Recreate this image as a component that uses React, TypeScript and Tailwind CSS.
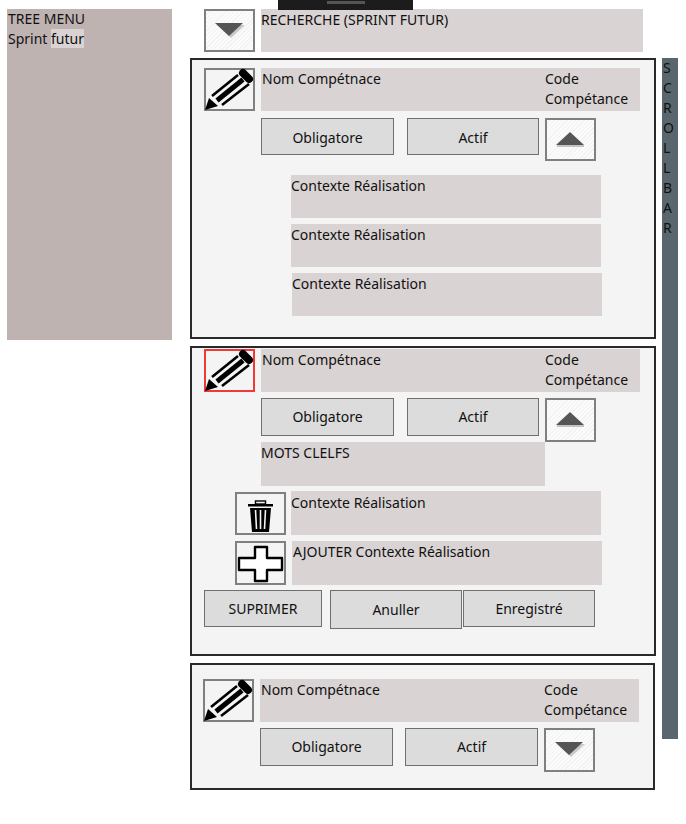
import React from "react";

const font = "font-['Noto_Sans','Open_Sans',sans-serif]";

function Pencil() {
  return (
    <svg width="51" height="43" viewBox="0 0 51 43" className="absolute left-[-2px] top-[-2px]">
      <polygon points="1,42 5,30 14,38" fill="#000" />
      <path d="M8 28 L34 7" stroke="#000" strokeWidth="2.6" fill="none" />
      <path d="M18 37 L45 16" stroke="#000" strokeWidth="2.6" fill="none" />
      <path d="M13 32.5 L39 11.5" stroke="#000" strokeWidth="5" fill="none" />
      <path d="M39 5 L45 11" stroke="#000" strokeWidth="8" strokeLinecap="round" fill="none" />
    </svg>
  );
}

function IconBox({ children, red, hatch, h = "h-[43px]", className = "" }: { children: React.ReactNode; red?: boolean; hatch?: boolean; h?: string; className?: string }) {
  return (
    <div
      className={`relative w-[51px] ${h} shrink-0 border-2 ${red ? "border-[#f03a3a]" : "border-[#808080]"} ${
        hatch ? "bg-[repeating-linear-gradient(135deg,#fbfbfb_0px,#fbfbfb_2px,#f2f2f2_2px,#f2f2f2_3px)]" : "bg-[#f4f4f4]"
      } ${className}`}
    >
      {children}
    </div>
  );
}

function Arrow({ up }: { up?: boolean }) {
  return (
    <svg width="51" height="43" viewBox="0 0 51 43" className="absolute left-[-2px] top-[-2px]">
      {up ? (
        <>
          <polygon points="11,27 39,27 25,14" fill="#555" />
          <rect x="12" y="27" width="27" height="2" fill="#c4c4c4" />
        </>
      ) : (
        <>
          <polygon points="13,16 41,16 27,29" fill="#c8c8c8" />
          <polygon points="11,14 39,14 25,27" fill="#555" />
        </>
      )}
    </svg>
  );
}

function Field({ children, h = "h-[43px]", className = "" }: { children: React.ReactNode; h?: string; className?: string }) {
  return <div className={`bg-[#d9d3d3] ${h} shrink-0 ${className}`}>{children}</div>;
}

function Btn({ children, h = "h-[38px]", className = "" }: { children: React.ReactNode; h?: string; className?: string }) {
  return (
    <div className={`flex items-center justify-center ${h} shrink-0 bg-[#dcdcdc] border border-[#707070] ${className}`}>
      {children}
    </div>
  );
}

function Head({ red }: { red?: boolean }) {
  return (
    <div className="flex">
      <IconBox red={red}>
        <Pencil />
      </IconBox>
      <Field className="ml-[6px] w-[284px] pt-px pl-px">Nom Compétnace</Field>
      <Field className="w-[95px] pt-px">Code Compétance</Field>
    </div>
  );
}

export default function App() {
  return (
    <div className={`relative w-[686px] h-[824px] bg-white flex items-start text-[14px] leading-[20px] text-[#111] ${font}`}>
      <div className="absolute left-[278px] top-0 w-[135px] h-[10px] bg-[#1c1c1c]">
        <div className="mx-auto mt-[1px] w-[38px] h-[3px] bg-[#555]" />
      </div>

      <aside className="ml-[7px] mt-[9px] w-[165px] h-[331px] bg-[#bfb3b1] shrink-0 pl-px">
        <div>TREE MENU</div>
        <div>
          Sprint <span className="bg-[#d9d3d3]">futur</span>
        </div>
      </aside>

      <main className="ml-[18px] w-[466px] shrink-0">
        <div className="flex ml-[14px] mt-[9px]">
          <IconBox hatch>
            <Arrow />
          </IconBox>
          <Field className="ml-[6px] w-[382px] pt-px">RECHERCHE (SPRINT FUTUR)</Field>
        </div>

        <section className="mt-[6px] w-[466px] h-[281px] border-2 border-[#2a2a2a] bg-[#f4f4f4] pl-[12px] pt-[8px]">
          <Head />
          <div className="flex items-start ml-[57px] mt-[7px]">
            <Btn h="h-[37px]" className="w-[133px] pt-[2px]">Obligatore</Btn>
            <Btn h="h-[37px]" className="w-[132px] ml-[13px] pt-[2px]">Actif</Btn>
            <IconBox hatch className="ml-[6px]">
              <Arrow up />
            </IconBox>
          </div>
          <div className="ml-[87px] mt-[14px] flex flex-col gap-[6px]">
            <Field className="w-[310px] pt-px">Contexte Réalisation</Field>
            <Field className="w-[310px] pt-px">Contexte Réalisation</Field>
            <Field className="w-[310px] ml-px pt-px">Contexte Réalisation</Field>
          </div>
        </section>

        <section className="mt-[7px] w-[466px] h-[310px] border-2 border-[#2a2a2a] bg-[#f4f4f4] pl-[12px] pt-px">
          <Head red />
          <div className="flex items-start ml-[57px] mt-[6px]">
            <Btn className="w-[133px]">Obligatore</Btn>
            <Btn className="w-[132px] ml-[13px]">Actif</Btn>
            <IconBox hatch h="h-[44px]" className="ml-[6px]">
              <Arrow up />
            </IconBox>
          </div>
          <Field h="h-[44px]" className="ml-[57px] w-[284px] pt-px">MOTS CLELFS</Field>
          <div className="flex ml-[31px] mt-[5px]">
            <IconBox className="mt-px">
              <svg width="51" height="43" viewBox="0 0 51 43" className="absolute left-[-2px] top-[-2px]">
                <rect x="13" y="12" width="25" height="2.5" fill="#000" />
                <rect x="20.5" y="9" width="10" height="3" fill="none" stroke="#000" strokeWidth="1.4" />
                <path d="M15 16 H36 L34 40 H17 Z" fill="#000" />
                <path d="M20.5 18 L21.5 37 M25.5 18 V37 M30.5 18 L29.5 37" stroke="#f4f4f4" strokeWidth="1.6" fill="none" />
              </svg>
            </IconBox>
            <Field h="h-[44px]" className="ml-[5px] w-[310px] pt-[2px]">Contexte Réalisation</Field>
          </div>
          <div className="flex ml-[31px] mt-[6px]">
            <IconBox h="h-[44px]">
              <svg width="51" height="44" viewBox="0 0 51 44" className="absolute left-[-2px] top-[-2px]">
                <path d="M20 6 H32 V17 H47 V29 H32 V40 H20 V29 H4 V17 H20 Z" fill="#fff" stroke="#000" strokeWidth="2.4" strokeLinejoin="round" />
              </svg>
            </IconBox>
            <Field h="h-[44px]" className="ml-[6px] w-[310px] pt-px pl-px">AJOUTER Contexte Réalisation</Field>
          </div>
          <div className="flex items-start mt-[5px]">
            <Btn h="h-[37px]" className="w-[118px]">SUPRIMER</Btn>
            <Btn h="h-[39px]" className="w-[132px] ml-[8px]">Anuller</Btn>
            <Btn h="h-[37px]" className="w-[132px] ml-px">Enregistré</Btn>
          </div>
        </section>

        <section className="mt-[7px] w-[465px] h-[127px] border-2 border-[#2a2a2a] bg-[#f4f4f4] pl-[11px] pt-[14px]">
          <Head />
          <div className="flex items-start ml-[57px] mt-[6px]">
            <Btn className="w-[133px]">Obligatore</Btn>
            <Btn className="w-[133px] ml-[12px]">Actif</Btn>
            <IconBox hatch h="h-[44px]" className="ml-[6px]">
              <Arrow />
            </IconBox>
          </div>
        </section>
      </main>

      <div className="ml-[6px] mt-[58px] w-[16px] h-[681px] bg-[#5a666d] shrink-0 flex flex-col pl-px">
        {"SCROLLBAR".split("").map((c, i) => (
          <span key={i}>{c}</span>
        ))}
      </div>
    </div>
  );
}
